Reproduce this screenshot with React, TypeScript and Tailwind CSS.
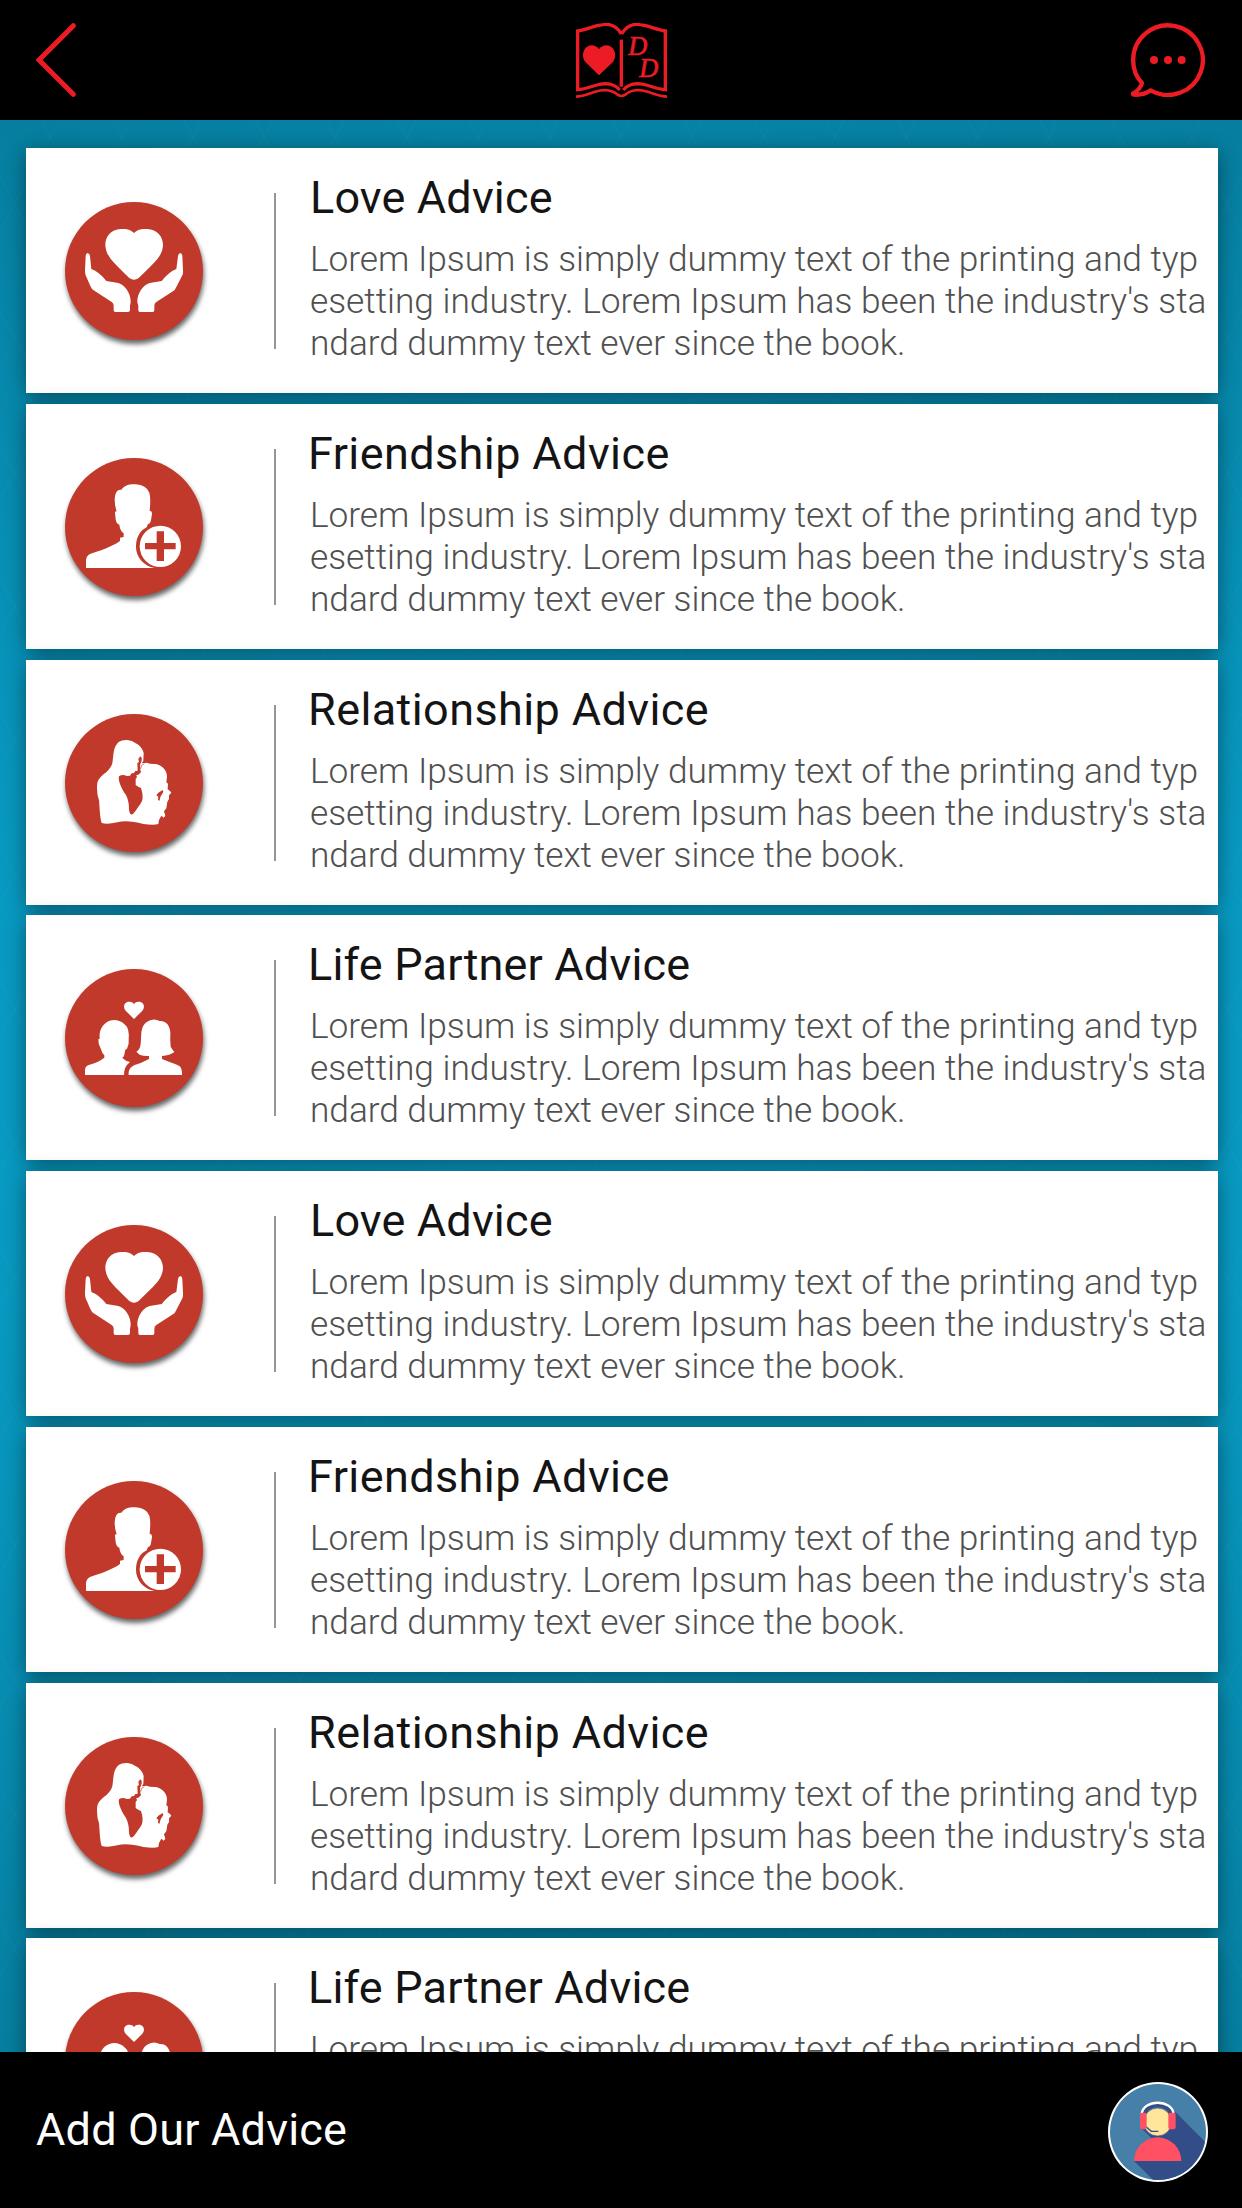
import type { ReactNode } from "react";

const body = [
  { text: "Lorem Ipsum is simply dummy text of the printing and typ", spacing: "tracking-[-0.035px]" },
  { text: "esetting industry. Lorem Ipsum has been the industry's sta", spacing: "tracking-[-0.015px]" },
  { text: "ndard dummy text ever since the book.", spacing: "tracking-[-0.065px]" },
];

function LoveIcon() {
  return (
    <svg viewBox="135 66 414 414" className="size-full" fill="#fff">
      <path d="M342 159C328 146 314 147 302 147C273 148 256 170 256 194C257 230 282 248 328 294Q342 305 356 294C402 248 428 230 429 194C429 170 411 148 382 147C370 147 356 146 342 159Z" />
      <path d="M203 219Q209 220 210 229L214 267Q237 275 259 303L295 309C315 315 333 340 332 367L330 377V391Q329 396 324 396H286Q281 396 281 391V377Q281 370 275 366L221 331Q215 327 211 318L197 286Q195 282 195 270L197 229Q197 220 203 219Z" />
      <path d="M481 219Q475 220 474 229L469 267Q447 275 425 303L389 309C369 315 351 340 352 367L355 377V391Q355 396 360 396H398Q403 396 403 391V377Q403 370 409 366L460 333Q465 330 469 321L487 286Q490 279 489 270L487 229Q487 220 481 219Z" />
    </svg>
  );
}

function FriendIcon() {
  return (
    <svg viewBox="45 54 414 414" className="size-full" fill="#fff">
      <path d="M108 384V360Q109 346 122 341C150 332 185 321 210 303V293L221 291V280Q210 272 208 254Q199 252 197 238L195 219Q194 214 200 214Q194 198 194 178Q195 147 214 149C226 132 245 132 257 133Q289 135 298 158Q303 173 299 212Q307 213 306 222L303 240Q301 252 294 252L290 262C270 272 258 292 258 320C258 352 282 378 314 384Z" />
      <circle cx="331" cy="319" r="62" />
      <path d="M320 274H342V309H377V328H342V363H320V328H285V309H320Z" fill="#c0392b" />
    </svg>
  );
}

function RelationshipIcon() {
  return (
    <svg viewBox="45 57 414 414" className="size-full" fill="#fff">
      <path d="M155 384C149 366 149 335 147 316Q141 300 141 280Q140 258 150 248C166 232 180 227 187 205C191 180 189 155 206 141Q216 134 232 135Q247 136 256 144Q276 154 281 174L280 198L275 205L290 203Q300 208 318 207C337 211 351 226 351 245L349 262L354 266L353 283L360 288L364 293L357 301V312L352 320L349 340L342 349L346 362L341 368L334 362L327 375L325 387Q312 391 280 387C250 380 226 376 202 382Q172 389 155 384Z" />
      <path d="M207 244Q218 237 230 243L240 242L245 235L252 234L255 229L263 227L262 204L267 201L265 191L271 184L275 188L275 197L270 210L271 224L273 232L265 239L259 240L261 247L257 251V270Q264 276 273 279Q281 303 276 318Q271 329 263 338Q253 354 247 358Q240 362 237 344C237 326 235 315 228 300C217 284 203 258 207 244Z" fill="#c0392b" />
      <path d="M319 301L325 293L338 285L340 291L332 304L328 318L324 314L325 305Z" fill="#c0392b" />
      <path d="M272 221L275 211L283 206" fill="none" stroke="#c0392b" strokeWidth="2" />
    </svg>
  );
}

function PartnerIcon() {
  return (
    <svg viewBox="45 57 414 414" className="size-full" fill="#fff">
      <path d="M252 207L227 182C218 172 222 155 237 155Q247 154 252 162Q257 154 267 155C282 155 286 172 277 182Z" />
      <path d="M105 375V359Q106 349 116 345C133 339 149 335 163 323V316Q156 310 153 298Q144 283 145 268L149 266C146 237 162 212 192 210Q211 210 225 224Q239 234 236 270Q238 283 231 296L226 299L222 318L217 324Q227 334 240 336Q221 351 222 375Z" />
      <path d="M236 375C235 361 240 353 252 346Q275 339 297 327V318Q280 319 269 314L259 305Q270 299 272 282C275 255 270 230 290 216Q309 202 329 213C350 212 359 228 361 247Q360 271 362 290Q367 299 373 306Q360 317 336 318V327C354 335 372 340 387 347Q397 353 396 375Z" />
    </svg>
  );
}

type Topic = { title: string; icon: () => ReactNode; heading: string };

const love: Topic = { title: "Love Advice", icon: LoveIcon, heading: "tracking-[0.15px]" };
const friend: Topic = { title: "Friendship Advice", icon: FriendIcon, heading: "-ml-[2px] tracking-[0.4px]" };
const relationship: Topic = { title: "Relationship Advice", icon: RelationshipIcon, heading: "-ml-[2px] tracking-[0.4px]" };
const partner: Topic = { title: "Life Partner Advice", icon: PartnerIcon, heading: "-ml-[2px] tracking-[0.17px]" };

const advice: { topic: Topic; gap: string }[] = [
  { topic: love, gap: "mb-[11px]" },
  { topic: friend, gap: "mb-[11px]" },
  { topic: relationship, gap: "mb-[10px]" },
  { topic: partner, gap: "mb-[11px]" },
  { topic: love, gap: "mb-[11px]" },
  { topic: friend, gap: "mb-[11px]" },
  { topic: relationship, gap: "mb-[10px]" },
  { topic: partner, gap: "mb-0" },
];

function BookLogo() {
  return (
    <svg viewBox="78 69 273 225" className="h-[75px] w-[91px]" fill="none" stroke="#ed1c24" strokeWidth="10">
      <path d="M214 102C200 77 178 71 158 74C132 77 110 89 83 93V269C115 268 137 251 166 251Q195 252 209 270M215 102C229 77 251 71 271 74C297 77 319 89 346 93V269C314 268 292 251 263 251Q234 252 220 270" />
      <path d="M214 119V260" />
      <path d="M78 290C110 289 135 270 165 270Q190 272 203 284Q214 292 226 284Q240 271 263 270C293 270 319 289 351 290" strokeWidth="8" />
      <path d="M147 226L107 187C91 168 101 137 125 136Q140 137 147 148Q154 137 170 136C193 137 204 168 188 187Z" fill="#ed1c24" stroke="none" />
      <text x="235" y="165" fill="#ed1c24" stroke="#ed1c24" strokeWidth="2" fontFamily="Liberation Serif, serif" fontStyle="italic" fontSize="82" textLength="57" lengthAdjust="spacingAndGlyphs">D</text>
      <text x="268" y="232" fill="#ed1c24" stroke="#ed1c24" strokeWidth="2" fontFamily="Liberation Serif, serif" fontStyle="italic" fontSize="82" textLength="57" lengthAdjust="spacingAndGlyphs">D</text>
    </svg>
  );
}

function AgentAvatar() {
  return (
    <svg viewBox="84 126 300 300" className="mt-1 size-[100px]">
      <defs>
        <clipPath id="avatar">
          <circle cx="234" cy="276" r="144" />
        </clipPath>
      </defs>
      <circle cx="234" cy="276" r="150" fill="#fff" />
      <circle cx="234" cy="276" r="144" fill="#467fa7" />
      <path clipPath="url(#avatar)" d="M278 208L420 350V470H270L162 363L230 310L186 266Z" fill="#334d88" />
      <path d="M187 232A47 47 0 0 1 279 232" fill="none" stroke="#334d88" strokeWidth="13" />
      <circle cx="233" cy="246" r="42" fill="#ffe69b" stroke="#334d88" strokeWidth="2" />
      <path d="M185 222C191 177 275 177 281 222" fill="none" stroke="#fff" strokeWidth="7" />
      <path d="M198 260L214 274H235" fill="none" stroke="#334d88" strokeWidth="4" />
      <rect x="180" y="218" width="20" height="50" rx="6" fill="#ff5064" />
      <rect x="265" y="218" width="22" height="50" rx="6" fill="#ff5064" />
      <path d="M162 363A71 71 0 0 1 304 363Z" fill="#ff5064" />
    </svg>
  );
}

export default function App() {
  return (
    <div className="flex h-[2208px] w-[1242px] flex-col overflow-hidden bg-black font-[Roboto,sans-serif]">
      <header className="flex h-[120px] shrink-0 items-start justify-between pt-[23px] pr-[37px] pl-9">
        <svg viewBox="108 69 120 222" className="h-[74px] w-10" fill="none" stroke="#ed1c24" strokeWidth="15" strokeLinecap="round" strokeLinejoin="miter">
          <path d="M220 77L117 180L220 283" />
        </svg>
        <div className="ml-9">
          <BookLogo />
        </div>
        <svg viewBox="93 69 222 222" className="size-[74px]" fill="none" stroke="#ed1c24" strokeWidth="13" strokeLinejoin="round">
          <path d="M126 249C108 231 99.500 206 99.500 180A104.500 104.500 0 1 1 152 271Q132 286 101 284Q99 284 99 280Q120 270 126 249Z" />
          <g fill="#ed1c24" stroke="none">
            <circle cx="162" cy="180" r="12" />
            <circle cx="204" cy="180" r="12" />
            <circle cx="245" cy="180" r="12" />
          </g>
        </svg>
      </header>

      <main className="h-[1932px] shrink-0 overflow-hidden bg-[repeating-linear-gradient(62deg,transparent_0px,transparent_60px,rgba(255,255,255,0.02)_61px,transparent_63px),repeating-linear-gradient(-62deg,transparent_0px,transparent_60px,rgba(255,255,255,0.02)_61px,transparent_63px),radial-gradient(1500px_1050px_at_center,#0aa0ca_0%,#0899c1_45%,#067e9f_100%)] pt-7 pl-[26px]">
        {advice.map(({ topic: { title, icon: Icon, heading }, gap }, i) => (
          <article key={i} className={`flex h-[245px] w-[1192px] bg-white shadow-[0_4px_20px_-1px_rgba(0,0,0,0.48)] ${gap}`}>
            <div className="mt-[54px] ml-[39px] size-[138px] shrink-0 rounded-full bg-[#c0392b] shadow-[1px_4px_5px_rgba(0,0,0,0.6)]">
              <Icon />
            </div>
            <div className="mt-[45px] ml-[71px] h-[156px] w-0.5 shrink-0 bg-[#969696]" />
            <div className="ml-[34px] whitespace-nowrap">
              <h2 className={`mt-[23px] text-[45px] leading-[54px] text-[#141414] ${heading}`}>{title}</h2>
              <div className="mt-[13px] text-[35.3px] leading-[42px] font-light text-[#505050]">
                {body.map(({ text, spacing }) => (
                  <p key={text} className={spacing}>
                    {text}
                  </p>
                ))}
              </div>
            </div>
          </article>
        ))}
      </main>

      <footer className="flex h-[156px] shrink-0 items-center justify-between pr-[34px] pl-9">
        <span className="text-[45px] leading-[54px] tracking-[0.2px] text-white">Add Our Advice</span>
        <AgentAvatar />
      </footer>
    </div>
  );
}
